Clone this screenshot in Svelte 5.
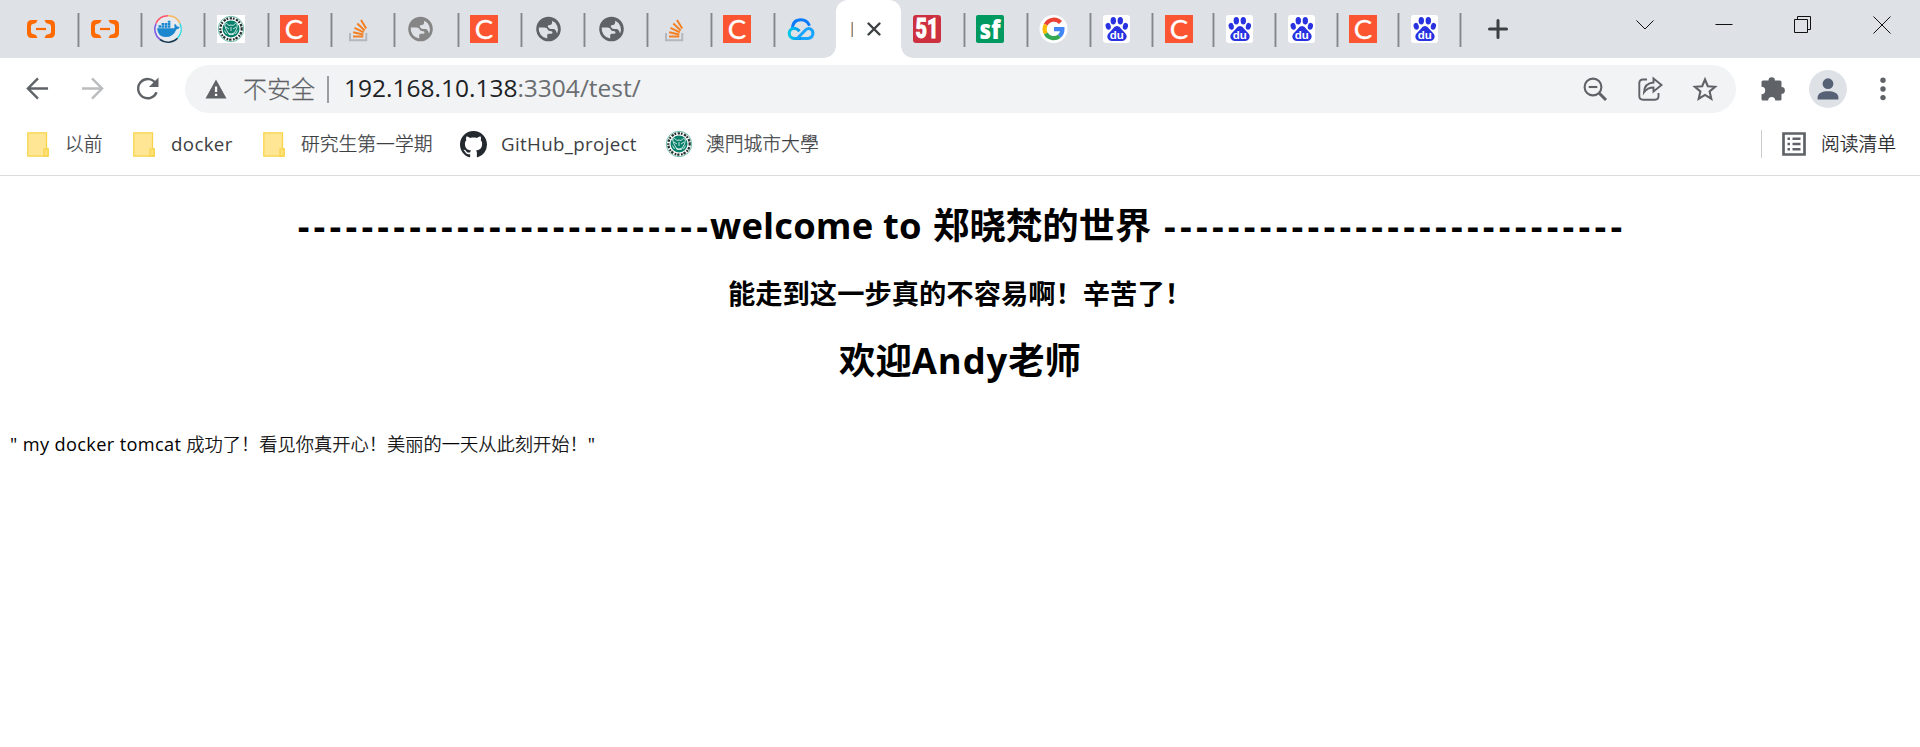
<script>
  // [icon, tab width, icon inset]
  const before = [
    ['aliyun', 65, 12], ['aliyun', 63, 10.5], ['docker', 63, 11], ['crest', 64, 11], ['csdn', 63, 10], ['stack', 63, 11],
    ['globeLight', 64, 11], ['csdn', 63, 10], ['globe', 63, 11.5], ['globe', 63, 11.5], ['stack', 64, 10.5], ['csdn', 63, 10], ['cloud', 60, 10.5]
  ];
  const after = [
    ['cto', 65, 12], ['sf', 63, 10], ['google', 63, 11], ['baidu', 62, 11], ['csdn', 61, 10.5],
    ['baidu', 62, 11], ['baidu', 62, 11], ['csdn', 61, 10], ['baidu', 62, 11]
  ];
  const leftDashes = '-'.repeat(26);
  const rightDashes = '-'.repeat(29);
</script>

{#snippet icon(name)}
  <svg class="fav" viewBox="0 0 28 28">
    {#if name === 'aliyun'}
      <g fill="#ff6a00">
        <path d="M10.500 5H5Q0 5 0 10v8q0 5 5 5h5.500L9 20 5.800 19Q4 18.500 4 17v-6q0-1.500 1.800-2L9 8z" />
        <path d="M17.500 5H23q5 0 5 5v8q0 5-5 5h-5.500L19 20l3.200-1q1.800-.5 1.800-2v-6q0-1.500-1.800-2L19 8z" />
        <path d="M9 12.900h10v2.200H9z" />
      </g>
    {:else if name === 'docker'}
      <circle cx="14" cy="14" r="13.300" fill="#e6eaef" />
      <g fill="none" stroke-width="1.600">
        <path d="M14 .8A13.200 13.200 0 0 1 26 8.500" stroke="#f9b45e" />
        <path d="M26 8.500A13.200 13.200 0 0 1 23.500 23.200" stroke="#2fdbe0" />
        <path d="M23.500 23.200A13.200 13.200 0 0 1 6 24.500" stroke="#183b52" />
        <path d="M6 24.500A13.200 13.200 0 0 1 2 8.500" stroke="#7f5be0" />
        <path d="M2 8.500A13.200 13.200 0 0 1 14 .8" stroke="#ff5168" />
      </g>
      <path fill="#1b87cf" d="M3 13.200h17.300q.7-1.400-.2-3.200l1-1q1.500.9 1.800 2.600 1.600-.4 2.900.5-1 2.200-3.500 2.300Q19.500 22 11.500 22 4 22 3 13.200z" />
      <path fill="#1b87cf" d="M4.500 10.300h2.600v2.500H4.500zM7.600 10.300h2.600v2.500H7.600zM10.700 10.300h2.600v2.500h-2.600zM13.800 10.300h2.600v2.500h-2.600zM7.600 8h2.600v2H7.600zM10.700 8h2.600v2h-2.600zM13.800 8h2.600v2h-2.600zM13.800 5.800h2.600v1.900h-2.600z" />
    {:else if name === 'crest'}
      <path class="paper" fill="#fff" d="M0 0h28v28H0z" />
      <circle cx="14" cy="14" r="12.700" fill="#fff" stroke="#5eb3a4" stroke-width=".9" />
      <circle cx="14" cy="14" r="10.700" fill="none" stroke="#26302e" stroke-width="2.200" stroke-dasharray="1.700 1.500 2.400 .9" />
      <circle cx="14" cy="14" r="8.500" fill="#087f6b" />
      <path d="M7.500 9.500q2-2.500 4.500 1 2-1 4 0 2.500-3.500 4.500-1l-1 4.500-3 5.500h-4.500l-3-5.500zM9 12l3 2M19 12l-3 2M14 12v4M11 18q3 2 6 0M7.500 15.500l2 3.500M20.500 15.500l-2 3.500" fill="none" stroke="#d8efea" stroke-width=".9" />
    {:else if name === 'csdn'}
      <path fill="#fc5531" d="M0 0h28v28H0z" />
      <text x="14" y="23.700" text-anchor="middle" font-family="Lato" font-size="27.500" fill="#fff" stroke="#fff" stroke-width=".3">C</text>
    {:else if name === 'stack'}
      <path d="M6 18v7.200h16.300V18" fill="none" stroke="#b4b8bc" stroke-width="2" />
      <path d="M9 21.500h10.300M9.100 17.300l10.200 2.100M10.500 12.800l9.300 4.600M13.300 8.500l7.400 7M17 5l5.200 8.500" stroke="#f48024" stroke-width="2" />
    {:else if name === 'globe' || name === 'globeLight'}
      <g transform="translate(-.5 1.200)" fill={name === 'globe' ? '#5f6368' : '#858585'}>
        <path fill-rule="evenodd" d="M14 .5a12.300 12.300 0 1 0 0 24.600A12.300 12.300 0 0 0 14 .5zM4.300 11.200H10q2.600 0 3.200 2.200.3 1.300 2 1.500l1.800.2q1 .2 1 1.100 0 1.200-1.300 1.300h-2.500q-1.500 0-1.500 1.500v3.300A9.800 9.800 0 0 1 4.300 11.200zM22.600 17.400l-1.300-3q-.7-1.500-2.200-1.500h-2.400q-1.800 0-2.700-1.300l-.6-1q-.6-1.200.7-1.600l2.200-.5q1-.3 1.200-1.400l.3-2.500a9.700 9.700 0 0 1 4.800 12.800z" />
      </g>
    {:else if name === 'cloud'}
      <defs><linearGradient id="cloud-blue"><stop stop-color="#00c7e6" /><stop offset="1" stop-color="#087bff" /></linearGradient></defs>
      <g fill="none" stroke-width="3">
        <path d="M5.500 14C5.500 7.500 9 4.700 14 4.700s7 2.300 8.500 6" stroke="#087bff" />
        <path d="M12.500 17q-2.500-3-5.800-3a5.200 5.200 0 0 0 0 10.300h13.600" transform="translate(0 -.8)" stroke="url(#cloud-blue)" />
        <path d="M10.500 23.300l8.300-8.500q2-2 4.500-1a5.200 5.200 0 0 1-2.300 9.700h-7" stroke="#18a5ff" />
      </g>
    {:else if name === 'cto'}
      <rect width="28" height="28" rx="3" fill="#cd303e" />
      <text x="14" y="23.400" text-anchor="middle" textLength="23" lengthAdjust="spacingAndGlyphs" font-family="Roboto" font-weight="900" font-size="27" fill="#fff" stroke="#fff" stroke-width=".8">51</text>
    {:else if name === 'sf'}
      <rect width="28" height="28" rx="2" fill="#009a61" />
      <text x="14" y="24" text-anchor="middle" textLength="21" lengthAdjust="spacingAndGlyphs" font-family="Open Sans" font-weight="800" font-size="26" fill="#fff">sf</text>
    {:else if name === 'google'}
      <circle cx="13.500" cy="14" r="14" fill="#fff" />
      <g fill="none" stroke-width="4.200">
        <path d="M20.500 7.500A9 9 0 0 0 5.800 9.700" stroke="#ea4335" />
        <path d="M5.800 9.700a9 9 0 0 0 0 8.800" stroke="#fbbc05" />
        <path d="M5.800 18.500a9 9 0 0 0 13.600 2.600" stroke="#34a853" />
        <path d="M19.400 21.100q3-2.400 3-6.900H14" stroke="#4285f4" />
      </g>
    {:else if name === 'baidu'}
      <rect width="27" height="28" rx="3" fill="#fff" />
      <g fill="#2932e1"><ellipse cx="5.200" cy="11.300" rx="2.600" ry="3.500" transform="rotate(-12 5.200 11.300)" /><ellipse cx="10.300" cy="5.800" rx="2.700" ry="3.700" /><ellipse cx="17.300" cy="5.800" rx="2.700" ry="3.700" /><ellipse cx="22.400" cy="11.300" rx="2.600" ry="3.500" transform="rotate(12 22.400 11.300)" />
        <path d="M14 11q2.600 0 4.300 3l4 4.200c2.900 3 .8 7.800-3.300 7.800H9c-4.200 0-6.200-4.800-3.300-7.800l4-4.200Q11.400 11 14 11z" /></g>
      <text x="13.800" y="23.600" text-anchor="middle" font-family="Liberation Sans" font-weight="700" font-size="11.500" fill="#fff">du</text>
    {/if}
  </svg>
{/snippet}

{#snippet tab(item, last)}
  <div class="tab" class:last style="width:{item[1]}px;padding-left:{item[2]}px">{@render icon(item[0])}</div>
{/snippet}

{#snippet folder()}
  <svg class="folder" viewBox="0 0 22 25"><path d="M.8 24.200V.8h18.700v16h1.700v7.400z" fill="#ffe694" stroke="#f8d44b" stroke-width="1.300" /><path d="M17 24v-6.800h4V24z" fill="#ffe17c" stroke="#f8d44b" stroke-width="1.300" /></svg>
{/snippet}

<div class="browser">
  <header class="tabs">
    {#each before as item, i}{@render tab(item, i === before.length - 1)}{/each}
    <div class="active"><i class="title"></i><svg class="close" viewBox="0 0 14 14"><path d="M1.500 1.500l11 11M12.500 1.500l-11 11" stroke="#3c4043" stroke-width="2.400" stroke-linecap="round" /></svg></div>
    {#each after as item}{@render tab(item, false)}{/each}
    <svg class="plus" viewBox="0 0 22 22"><path d="M11 2.500v17M2.500 11h17" stroke="#3c4043" stroke-width="3" stroke-linecap="round" /></svg>
    <div class="window-controls">
      <svg viewBox="0 0 18 18"><path d="M.5 4.500l8.500 8.500 8.500-8.500" /></svg>
      <svg viewBox="0 0 18 18"><path d="M.5 8.500h17" /></svg>
      <svg viewBox="0 0 18 18"><path d="M.5 3.500h13v13H.5zM3.500 3.500v-3h13v13h-3" /></svg>
      <svg viewBox="0 0 18 18"><path d="M.5 .5l17 17M17.500.5l-17 17" /></svg>
    </div>
  </header>

  <div class="toolbar">
    <svg class="nav" viewBox="0 0 24 24"><path d="M23 12H2M12.500 1.500L2 12l10.500 10.500" /></svg>
    <svg class="nav forward" viewBox="0 0 24 24"><path d="M1 12h21M11.500 1.500L22 12 11.500 22.500" /></svg>
    <svg class="nav reload" viewBox="0 0 24 24"><path d="M20.500 6.500a10 10 0 1 0 1 9.500" /><path d="M23.500.5v10h-10z" class="solid" /></svg>
    <div class="address">
      <svg class="warning" viewBox="0 0 22 20"><path d="M11 .5L21.500 19.500H.5z" fill="#5f6368" /><path d="M9.900 7.500h2.300v5.500H9.900zM9.900 14.800h2.300V17H9.900z" fill="#fff" /></svg>
      <span class="insecure">不安全</span><i class="divider"></i>
      <span class="url"><b>192.168.10.138</b>:3304/test/</span>
      <div class="actions">
        <svg viewBox="0 0 24 24"><circle cx="10" cy="10" r="8.400" /><path d="M5.700 10h8.600" /><path d="M16 16l7 7" stroke-width="3" /></svg>
        <svg viewBox="0 0 24 24"><path d="M9 2.500H5Q1.300 2.500 1.300 6v13q0 3.700 3.700 3.700h12q3.500 0 3.500-3.700v-3M15.500 1.500L23.500 8l-8 6.500v-4q-6 0-9.500 4.800.5-9.200 9.500-9.800z" stroke-width="1.900" /></svg>
        <svg viewBox="0 0 24 24"><path d="M12 2.500l2.800 6.700 7.300.6-5.500 4.700 1.700 7.200-6.300-3.800-6.300 3.800 1.700-7.200-5.500-4.700 7.300-.6z" /></svg>
      </div>
    </div>
    <svg class="puzzle" viewBox="0 0 25 25"><path fill="#5f6368" d="M7.500 4.500a3.200 3.200 0 0 1 6.400 0H19q1.500 0 1.500 1.500v5a3.400 3.400 0 0 1 0 6.800V23q0 1.500-1.500 1.500h-4.800a3.500 3.500 0 0 0-7 0H2Q.5 24.500.5 23v-4.800a3.700 3.700 0 0 0 0-7.400V6Q.5 4.500 2 4.500z" /></svg>
    <svg class="avatar" viewBox="0 0 38 38"><circle cx="19" cy="19" r="19" fill="#dee1e6" /><circle cx="19" cy="13.700" r="5.400" fill="#566176" /><path d="M8.600 29.500v-2c0-4.400 5-6.200 10.400-6.200s10.400 1.800 10.400 6.200v2z" fill="#566176" /></svg>
    <svg class="dots" viewBox="0 0 6 24"><g fill="#5f6368"><circle cx="3" cy="3.200" r="2.700" /><circle cx="3" cy="12" r="2.700" /><circle cx="3" cy="20.600" r="2.700" /></g></svg>
  </div>

  <nav class="bookmarks">
    <div class="mark one">{@render folder()}<span>以前</span></div>
    <div class="mark two">{@render folder()}<span class="latin">docker</span></div>
    <div class="mark three">{@render folder()}<span>研究生第一学期</span></div>
    <div class="mark four"><svg class="brand" viewBox="0 0 16 16"><path fill="#24292f" d="M8 0C3.580 0 0 3.580 0 8c0 3.540 2.290 6.530 5.470 7.590.4.070.55-.17.55-.38 0-.19-.01-.82-.01-1.490-2.010.37-2.530-.49-2.690-.94-.09-.23-.48-.94-.82-1.130-.28-.15-.68-.52-.01-.53.63-.01 1.080.58 1.230.82.72 1.210 1.870.87 2.330.66.07-.52.28-.87.51-1.070-1.780-.2-3.640-.89-3.640-3.950 0-.87.31-1.590.82-2.150-.08-.2-.36-1.020.08-2.120 0 0 .67-.21 2.200.82.64-.18 1.320-.27 2-.27s1.360.09 2 .27c1.530-1.040 2.200-.82 2.200-.82.44 1.100.16 1.920.08 2.120.51.56.82 1.270.82 2.150 0 3.070-1.870 3.750-3.650 3.950.29.25.54.73.54 1.480 0 1.070-.01 1.930-.01 2.200 0 .21.15.46.55.38A8.010 8.010 0 0 0 16 8c0-4.420-3.580-8-8-8z" /></svg><span class="latin">GitHub_project</span></div>
    <div class="mark five">{@render icon('crest')}<span class="trad">澳門城市大學</span></div>
    <div class="reading"><svg viewBox="0 0 24 24"><path d="M1.500 1.500h21v21h-21z" fill="none" stroke="#5f6368" stroke-width="2.700" /><path d="M5.500 5.500H8V8H5.500zm5 0h8V8h-8zm-5 5.300H8v2.500H5.500zm5 0h8v2.500h-8zm-5 5.300H8v2.500H5.500zm5 0h8v2.500h-8z" fill="#5f6368" /></svg><span>阅读清单</span></div>
  </nav>

  <main>
    <h1 class="welcome"><span class="dash">{leftDashes}</span><span class="words">welcome to</span><span class="name">郑晓梵的世界</span><span class="dash">{rightDashes}</span></h1>
    <h2>能走到这一步真的不容易啊！辛苦了！</h2>
    <h1 class="teacher">欢迎<span>Andy</span>老师</h1>
    <p><span class="latin-text">" my docker tomcat</span> 成功了！看见你真开心！美丽的一天从此刻开始！<span class="latin-text">"</span></p>
  </main>
</div>

<style>
  :global(body) { margin: 0; background: #fff; }
  .browser { width: 1920px; height: 747px; overflow: hidden; background: #fff; color: #000; font-family: "Open Sans", "Noto Sans CJK SC", sans-serif; }
  svg { display: block; flex: none; overflow: visible; }
  .tabs { height: 58px; box-sizing: border-box; padding-left: 15px; display: flex; background: #dee1e6; }
  .tab { flex: none; box-sizing: border-box; display: flex; padding-top: 15px; background: linear-gradient(90deg, #b4b7bb 0 1px, #84878a 1px 2px, #b9bcc0 2px) right 13px / 3px 34px no-repeat; }
  .tab.last { background: none; }
  .fav { width: 28px; height: 28px; }
  .active { position: relative; width: 65px; flex: none; box-sizing: border-box; display: flex; align-items: center; padding-left: 15px; background: #fff; border-radius: 12px 12px 0 0; }
  .active::before, .active::after { content: ""; position: absolute; bottom: 0; width: 12px; height: 12px; }
  .active::before { right: 100%; background: radial-gradient(circle at 0 0, transparent 11.500px, #fff 12px); }
  .active::after { left: 100%; background: radial-gradient(circle at 100% 0, transparent 11.500px, #fff 12px); }
  .title { width: 2px; height: 15px; background: linear-gradient(90deg, #e0b98d 50%, #858b93 50%); }
  .close { width: 14px; height: 14px; margin-left: 14px; }
  .plus { width: 22px; height: 22px; margin: 18px 0 0 25px; }
  .window-controls { margin: 16px 29px 0 auto; display: flex; gap: 61px; }
  .window-controls svg { width: 18px; height: 18px; fill: none; stroke: #111; stroke-width: 1; }
  .toolbar { height: 62px; display: flex; align-items: center; padding-left: 26px; box-sizing: border-box; }
  .nav { width: 23px; height: 23px; margin-bottom: 1px; fill: none; stroke: #5f6368; stroke-width: 2.500; }
  .forward { stroke: #babcbe; margin-left: 32px; }
  .reload { margin-left: 32px; }
  .solid { fill: #5f6368; stroke: none; }
  .address { height: 48px; width: 1551px; margin-left: 26px; border-radius: 24px; box-sizing: border-box; padding: 0 19px 0 20px; background: #f1f3f4; display: flex; align-items: center; flex: none; }
  .warning { width: 22px; height: 20px; }
  .insecure { width: 74px; height: 48px; margin-left: 16px; color: #5f6368; font: 300 24px/46px "Noto Sans CJK SC", sans-serif; -webkit-text-stroke: .25px; white-space: nowrap; }
  .divider { width: 2px; height: 27px; margin-left: 10px; background: #9a9da1; }
  .url { height: 48px; margin-left: 15px; font-size: 24.500px; line-height: 46px; color: #6b6e72; white-space: nowrap; }
  .url b { color: #202124; font-weight: 400; }
  .actions { margin: 0 0 1px auto; display: flex; gap: 31px; }
  .actions svg { width: 24px; height: 24px; fill: none; stroke: #5f6368; stroke-width: 2.100; }
  .puzzle { width: 25px; height: 25px; margin: 0 0 1px 25px; }
  .avatar { width: 38px; height: 38px; margin-left: 23px; }
  .dots { width: 6px; height: 24px; margin-left: 33px; }
  .bookmarks { height: 56px; box-sizing: border-box; border-bottom: 1px solid #d9dbdf; display: flex; padding: 0 24px 7px 27px; color: #3c4043; font: 300 18.800px/46px "Noto Sans CJK SC", sans-serif; -webkit-text-stroke: .25px; white-space: nowrap; }
  .mark { flex: none; display: flex; align-items: center; }
  .bookmarks span { height: 48px; }
  .folder { width: 22px; height: 25px; margin-right: 16px; }
  .one { width: 106px; }
  .two { width: 130px; }
  .three { width: 197px; }
  .four { width: 205px; }
  .latin { font-family: "Open Sans", sans-serif; font-weight: 400; font-size: 18.700px; letter-spacing: .35px; line-height: 47px; -webkit-text-stroke: 0; }
  .brand { width: 27px; height: 27px; margin-right: 14px; }
  .five .fav { margin-right: 13px; }
  .five .fav :global(.paper) { fill: none; }
  .trad { font-family: "Noto Sans CJK TC", sans-serif; }
  .reading { margin: 10px 0 10px auto; border-left: 1px solid #c8cacd; padding-left: 20px; display: flex; align-items: center; color: #202124; }
  .reading svg { width: 24px; height: 24px; margin-right: 15px; }
  main { padding: 22px 10px 0; }
  h1, h2, p { margin: 0; white-space: nowrap; }
  h1, h2 { font-weight: 700; text-align: center; }
  h1 { height: 54px; font-size: 36.400px; line-height: 54px; }
  .welcome { display: flex; justify-content: center; padding-left: 4px; }
  .dash { letter-spacing: 4.230px; }
  .words { width: 223px; margin-left: -2px; text-align: left; letter-spacing: .15px; }
  .name { width: 231px; text-align: left; }
  h2 { margin-top: 22px; height: 40px; font-size: 27.300px; line-height: 40px; }
  .teacher { margin-top: 19px; }
  .teacher span { letter-spacing: .9px; }
  p { margin-top: 43px; font-size: 18.200px; line-height: 28px; font-weight: 300; letter-spacing: .06px; -webkit-text-stroke: .25px; }
  .latin-text { font-weight: 400; letter-spacing: .36px; -webkit-text-stroke: 0; }
</style>
